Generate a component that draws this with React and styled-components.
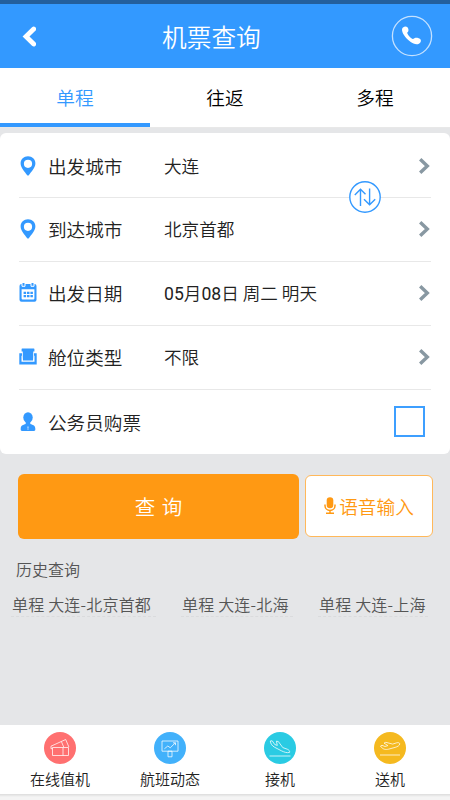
import React from "react"
import styled, { createGlobalStyle } from "styled-components"

const App = () => {
  return (
    <Page>
      <GlobalStyle />
      <StatusBar />
      <Header>
        <BackIcon />
        <Title>机票查询</Title>
        <PhoneIcon />
      </Header>
      <Tabs>
        {tabs.map((tab, i) => (
          <Tab key={tab} $active={i === 0}>
            {tab}
          </Tab>
        ))}
      </Tabs>
      <Card>
        {fields.map(({ label, value, Icon }) => (
          <Row key={label}>
            <IconBox>
              <Icon />
            </IconBox>
            <Label>{label}</Label>
            <Value>
              {value.split(/(\d+)/).map((part, i) => (i % 2 ? <Digits key={i}>{part}</Digits> : part))}
            </Value>
            {value ? <Arrow /> : <Checkbox />}
          </Row>
        ))}
        <SwapIcon />
      </Card>
      <Actions>
        <SearchButton>查 询</SearchButton>
        <VoiceButton>
          <MicIcon />
          语音输入
        </VoiceButton>
      </Actions>
      <HistoryTitle>历史查询</HistoryTitle>
      <HistoryList>
        {history.map(({ text, width }) => (
          <HistoryItem key={text} $width={width}>
            {text}
          </HistoryItem>
        ))}
      </HistoryList>
      <BottomNav>
        {services.map(({ name, color, drawing }) => (
          <Service key={name}>
            <ServiceIcon $color={color} viewBox="0 0 32 32">
              {drawing}
            </ServiceIcon>
            {name}
          </Service>
        ))}
      </BottomNav>
    </Page>
  )
}

export default App

const BackIcon = () => (
  <BackSvg viewBox="0 0 14 22">
    <path d="M11.700 4 L4 11.500 L11.700 19" />
  </BackSvg>
)

const PhoneIcon = () => (
  <PhoneSvg viewBox="0 0 42 42">
    <circle cx="21" cy="21" r="19.600" fill="none" stroke="#c4e1ff" strokeWidth="1.300" />
    <path
      d="M12 12.600c1.200-1.100 3-1.500 4.200-.5 1.100 1 1.700 3.100 1 4.400-.4.700-1.200 1-.9 1.700.9 2.300 3 4.500 5.400 5.700.8.400 1.300-.6 2.200-.9 1.500-.5 4.900.3 5.700 1.500.9 1.500-.2 3.500-1.700 4.200-2.500 1.200-5.700.1-8.500-2-4.100-3.100-7.500-7.200-8.300-11-.2-1.200.1-2.400.9-3.100z"
      fill="#fff"
    />
  </PhoneSvg>
)

const PinIcon = () => (
  <svg width="16" height="20" viewBox="0 0 16 20">
    <path
      d="M8 .2C3.800.2.600 3.300.600 7.200c0 4.600 4 8.200 6.400 11.800.5.800 1.500.8 2 0 2.400-3.600 6.400-7.200 6.400-11.800C15.400 3.300 12.200.2 8 .2zm0 3.500a4.100 4.100 0 1 1 0 8.200 4.100 4.100 0 0 1 0-8.200z"
      fill="#3399ff"
    />
  </svg>
)

const CalendarIcon = () => (
  <svg width="18" height="20" viewBox="0 0 18 20">
    <path
      d="M2.500 1H15.500A2 2 0 0 1 17.500 3V16.800a2 2 0 0 1-2 2H2.500a2 2 0 0 1-2-2V3a2 2 0 0 1 2-2z"
      fill="#3399ff"
    />
    <path d="M3 0v3.300h3V0M12 0v3.300h3V0" fill="#3399ff" stroke="#fff" strokeWidth="1" />
    <path d="M2.600 6.200h12.800v9.200a1 1 0 0 1-1 1H3.600a1 1 0 0 1-1-1z" fill="#fff" />
    <path d="M4.600 9.800h9.400M4.600 13.200h9.400" stroke="#3399ff" strokeWidth="2.300" strokeDasharray="2.500 .9" />
  </svg>
)

const SeatIcon = () => (
  <svg width="18" height="20" viewBox="0 0 18 20">
    <path
      d="M3.200 1.500h11.600a.6.6 0 0 1 .6.600v2.400h-1.200v5.200l-.2 3.900H4l-.2-3.900V4.500H2.600V2.100a.6.6 0 0 1 .6-.6z"
      fill="#3399ff"
    />
    <path
      d="M.3 6.200h2.700v2.600h-.5v6h13V8.800H15V6.200h2.700v11.300H.3z"
      fill="#3399ff"
    />
  </svg>
)

const PersonIcon = () => (
  <svg width="16" height="20" viewBox="0 0 16 20">
    <ellipse cx="8" cy="5.600" rx="4.700" ry="5.300" fill="#3399ff" />
    <path
      d="M5.700 9h4.600v3c2 .8 5 1.200 5 4.500v1.300c0 .7-.5 1.200-1.200 1.200H1.900c-.7 0-1.200-.5-1.200-1.200v-1.300c0-3.300 3-3.700 5-4.500z"
      fill="#3399ff"
    />
    <path d="M8 14.200l.6.900-.4.900.2 1.800h-.8l.2-1.800-.4-.9z" fill="#fff" />
  </svg>
)

const Arrow = () => (
  <ArrowSvg viewBox="0 0 12 18">
    <path d="M2.200 2.200 L9.300 9 L2.200 15.800" />
  </ArrowSvg>
)

const SwapIcon = () => (
  <SwapSvg viewBox="0 0 32 32">
    <circle cx="16" cy="16" r="15.200" fill="#fff" />
    <path d="M11.500 25V8.500M5.800 14l5.700-5.700 5 5M20.600 7.500V24M15 18.200l5.600 5.600 5.600-5.600" />
  </SwapSvg>
)

const MicIcon = () => (
  <MicSvg viewBox="0 0 12 18">
    <rect x="2.700" y=".3" width="6.600" height="11" rx="3.300" fill="#ff9913" />
    <path d="M1 7.500v1.300a5 4.600 0 0 0 10 0V7.500M6 13.400v2.600M2 16.300h8" fill="none" stroke="#ff9913" strokeWidth="1.500" />
  </MicSvg>
)

const tabs = ["单程", "往返", "多程"]

const fields = [
  { label: "出发城市", value: "大连", Icon: PinIcon },
  { label: "到达城市", value: "北京首都", Icon: PinIcon },
  { label: "出发日期", value: "05月08日 周二 明天", Icon: CalendarIcon },
  { label: "舱位类型", value: "不限", Icon: SeatIcon },
  { label: "公务员购票", value: "", Icon: PersonIcon },
]

const history = [
  { text: "单程 大连-北京首都", width: 145 },
  { text: "单程 大连-北海", width: 112 },
  { text: "单程 大连-上海", width: 110 },
]

const services = [
  {
    name: "在线值机",
    color: "#ff7070",
    drawing: (
      <path d="M8.500 15.500h16v8h-16zM19 15.500v8M7 14.200l14.700-6.700 3.200 7.500M17.400 9.600l2.300 5.400M7 14.200v2.500h1.500" />
    ),
  },
  {
    name: "航班动态",
    color: "#42b1fb",
    drawing: (
      <path d="M8 9h16v10.200H8zM14 19.200h4v5.600h-4zM10.400 16.800l3.400-2.800 2.500 1.800 5-5M19 10.800h2.500v2.400" />
    ),
  },
  {
    name: "接机",
    color: "#2acbe3",
    drawing: (
      <path d="M6.300 9l1.900-.2 2.600 3.800 2.500.8-.9-4.200 1.900.3 4.500 6.100 4.500 1.600c1.700.7 2.600 1.800 2.300 3.200-2.800.8-5.400-.3-8.200-1.600l-6.900-3.600c-2.400-1.300-4-3.500-4.200-6.200zM5.500 24h21" />
    ),
  },
  {
    name: "送机",
    color: "#f5b91f",
    drawing: (
      <path d="M6.500 14l1.500-.7 3 1.200 2.900-.9-3.900-2.500 1.800-.8 6.900 1.800 4-1.300c1.600-.4 2.800-.1 3.100 1.100-.3 1.800-2.200 2.700-4.700 3.500l-6.300 1.700c-3.200.8-6.200.4-8.300-3.100zM6 23h20" />
    ),
  },
]

const GlobalStyle = createGlobalStyle`
  * {
    box-sizing: border-box;
  }

  body {
    margin: 0;
    font-family: "Noto Sans CJK SC", sans-serif;
    font-weight: 350;
  }
`

const Page = styled.div`
  display: flex;
  flex-direction: column;
  height: 800px;
  overflow: hidden;
  background: #e5e6e8;
`

const StatusBar = styled.div`
  flex: none;
  height: 4px;
  background: #235f9d;
`

const Header = styled.header`
  display: flex;
  flex: none;
  align-items: center;
  height: 64px;
  padding: 0 17px 0 22px;
  background: #3399ff;
`

const Title = styled.h1`
  flex: 1;
  margin: 0;
  padding: 0 0 1px 126px;
  color: #fff;
  font-size: 24.700px;
  font-weight: 350;
  line-height: 60px;
`

const BackSvg = styled.svg`
  width: 14px;
  height: 22px;
  fill: none;
  stroke: #fff;
  stroke-width: 4.800;
  stroke-linecap: round;
`

const PhoneSvg = styled.svg`
  width: 42px;
  height: 42px;
`

const Tabs = styled.nav`
  display: flex;
  flex: none;
  height: 60px;
  background: #fff;
  border-bottom: 1px solid #e8e8e8;
`

const Tab = styled.div`
  flex: 1;
  border-bottom: 4px solid ${({ $active }) => ($active ? "#3399ff" : "#fff")};
  color: ${({ $active }) => ($active ? "#3399ff" : "#000")};
  font-size: 18.700px;
  line-height: 58px;
  text-align: center;
`

const Card = styled.section`
  position: relative;
  flex: none;
  height: 321px;
  margin-top: 5px;
  padding: 0 19px;
  border-radius: 6px;
  background: #fff;
`

const Row = styled.div`
  display: flex;
  align-items: center;
  height: 64px;
  padding-bottom: 1px;
  color: #222;

  &:first-child {
    height: 65px;
    padding: 1px 0 0;
  }

  &:not(:nth-child(5)) {
    border-bottom: 1px solid #e8e8e8;
  }
`

const IconBox = styled.span`
  display: flex;
  justify-content: center;
  width: 18px;
`

const Label = styled.span`
  width: 115px;
  margin-left: 11px;
  padding-bottom: 1px;
  font-size: 18.600px;
  white-space: nowrap;
`

const Value = styled.span`
  flex: 1;
  padding: 0 0 1px 1px;
  font-size: 17.600px;
  white-space: nowrap;
`

const Digits = styled.span`
  font-family: Roboto, sans-serif;
  font-weight: 400;
`

const ArrowSvg = styled.svg`
  width: 12px;
  height: 18px;
  margin-right: 1px;
  fill: none;
  stroke: #8898a2;
  stroke-width: 3.400;
`

const Checkbox = styled.span`
  width: 31px;
  height: 31px;
  margin-right: 6px;
  border: 2px solid #3d9fff;
`

/* sits over the line between the two city rows */
const SwapSvg = styled.svg`
  position: absolute;
  top: 48px;
  right: 69px;
  width: 32px;
  height: 32px;
  fill: none;
  stroke: #3399ff;
  stroke-width: 1.400;
`

const Actions = styled.div`
  display: flex;
  flex: none;
  align-items: flex-start;
  gap: 6px;
  padding: 20px 17px 0 18px;
`

const Button = styled.button`
  padding: 0 0 1px;
  border: 0;
  border-radius: 6px;
  font-family: inherit;
  font-weight: 350;
`

const SearchButton = styled(Button)`
  width: 281px;
  height: 65px;
  background: #ff9913;
  color: #fff;
  font-size: 20.500px;
  word-spacing: 2px;
`

const VoiceButton = styled(Button)`
  display: flex;
  align-items: center;
  justify-content: center;
  gap: 3px;
  width: 128px;
  height: 62px;
  margin-top: 1px;
  border: 1px solid #ffb85a;
  background: #fff;
  color: #ff9913;
  font-size: 18.700px;
`

const MicSvg = styled.svg`
  width: 12px;
  height: 18px;
`

const HistoryTitle = styled.h2`
  flex: none;
  margin: 18px 0 0 16px;
  color: #555;
  font-size: 16px;
  font-weight: 350;
  line-height: 24px;
`

const HistoryList = styled.div`
  display: flex;
  flex: none;
  justify-content: space-between;
  margin: 12px 22px 0 11px;
`

const HistoryItem = styled.span`
  width: ${({ $width }) => $width}px;
  height: 24px;
  padding-left: 1px;
  border-bottom: 1px dashed #dadbdd;
  color: #555;
  font-size: 16px;
  letter-spacing: 0.200px;
  line-height: 23px;
  white-space: nowrap;
`

const BottomNav = styled.footer`
  display: flex;
  flex: none;
  height: 75px;
  margin-top: auto;
  padding: 0 5px;
  background: linear-gradient(#fff 69px, #dcdcdc 69px, #f4f4f4 72px);
`

const Service = styled.div`
  display: flex;
  flex: 1;
  flex-direction: column;
  align-items: center;
  padding-top: 7px;
  color: #222;
  font-size: 15px;
  line-height: 30px;
`

const ServiceIcon = styled.svg`
  width: 32px;
  height: 32px;
  border-radius: 50%;
  background: ${({ $color }) => $color};
  fill: none;
  stroke: #fff;
  stroke-opacity: 0.75;
  stroke-width: 1;
  stroke-linejoin: round;
`
